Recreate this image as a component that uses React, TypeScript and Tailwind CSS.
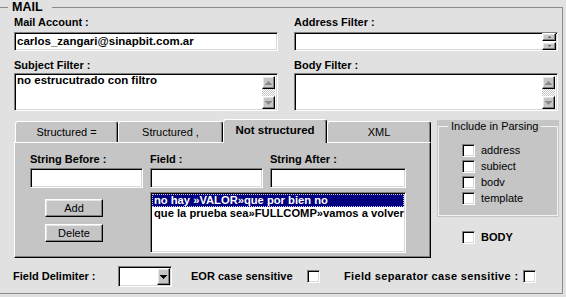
import React from "react";

const SUNKEN =
  "border border-t-[#808080] border-l-[#808080] border-b-white border-r-white shadow-[inset_1px_1px_0_#000000,inset_-1px_-1px_0_#d8d8d8]";
const RAISED =
  "border border-t-white border-l-white border-b-black border-r-black shadow-[inset_-1px_-1px_0_#808080,inset_1px_1px_0_#e6e6e6]";

function Tri({ dir, color, w, h }: { dir: "up" | "down"; color: string; w: number; h: number }) {
  const pts = dir === "up" ? `${w / 2},0 ${w},${h} 0,${h}` : `0,0 ${w},0 ${w / 2},${h}`;
  return (
    <svg width={w} height={h} viewBox={`0 0 ${w} ${h}`} shapeRendering="crispEdges" className="block">
      <polygon points={pts} fill={color} />
    </svg>
  );
}

function Label({ children, className = "" }: { children: React.ReactNode; className?: string }) {
  return <div className={`text-[11px] leading-[13px] font-bold whitespace-nowrap ${className}`}>{children}</div>;
}

function ScrollBtn({ dir }: { dir: "up" | "down" }) {
  return (
    <div className={`w-[13px] h-[13px] bg-[#c5c5c5] flex items-center justify-center ${RAISED}`}>
      <Tri dir={dir} color="#8a8a8a" w={7} h={4} />
    </div>
  );
}

function TextArea({ text }: { text?: string }) {
  return (
    <div className={`h-[38px] bg-white flex pr-[2px] ${SUNKEN}`}>
      <div className="flex-1 pl-[2px] text-[11.5px] leading-[13px] font-bold whitespace-nowrap">{text}</div>
      <div className="flex flex-col pt-[2px]">
        <ScrollBtn dir="up" />
        <div className="h-[7px] w-[13px] bg-[repeating-conic-gradient(#ffffff_0_25%,#c5c5c5_0_50%)] bg-[length:2px_2px]" />
        <ScrollBtn dir="down" />
      </div>
    </div>
  );
}

function Checkbox() {
  return <div className={`w-[13px] h-[13px] bg-white shrink-0 ${SUNKEN}`} />;
}

function Tab({ label, w, active }: { label: string; w: string; active?: boolean }) {
  if (active) {
    return (
      <div
        className={`${w} h-[24px] -mb-[1px] relative z-10 bg-[#c5c5c5] border-t border-l border-white border-r border-r-black rounded-t-[3px] shadow-[inset_-1px_0_0_#808080] flex items-center justify-center text-[11.5px] font-bold pb-[1px]`}
      >
        {label}
      </div>
    );
  }
  return (
    <div
      className={`${w} h-[21px] bg-[#c5c5c5] border-t border-l border-white border-r border-r-black rounded-t-[3px] shadow-[inset_-1px_0_0_#808080] flex items-center justify-center text-[11px]`}
    >
      {label}
    </div>
  );
}

function Button({ label }: { label: string }) {
  return (
    <div className={`w-[58px] h-[18px] bg-[#c5c5c5] flex items-center justify-center text-[11px] leading-[13px] ${RAISED}`}>
      {label}
    </div>
  );
}

export default function App() {
  return (
    <div className="w-[566px] h-[297px] overflow-hidden bg-[#e1e1e1] text-black font-['Liberation_Sans',Arial,sans-serif]">
      <fieldset className="w-[563px] h-[294px] m-0 p-0 min-w-0 border-t border-r border-b border-l-0 border-[#8a8a8a]">
        <legend className="ml-[8px] pl-[4px] pr-[9px] text-[12.5px] leading-[15px] font-bold">MAIL</legend>
        <div className="pl-[14px]">
          {/* Top fields */}
          <div className="grid grid-cols-[264px_264px] gap-x-[16px] pt-[1px]">
            <div className="flex flex-col">
              <Label>Mail Account :</Label>
              <div className={`mt-[3px] h-[19px] bg-white flex items-center pl-[2px] ${SUNKEN}`}>
                <span className="text-[11.5px] leading-[13px] font-bold whitespace-nowrap">carlos_zangari@sinapbit.com.ar</span>
              </div>
              <Label className="mt-[8px]">Subject Filter :</Label>
              <div className="mt-[1px]">
                <TextArea text="no estrucutrado con filtro" />
              </div>
            </div>
            <div className="flex flex-col">
              <Label>Address Filter :</Label>
              <div className={`mt-[3px] h-[19px] bg-white flex justify-end pr-[1px] ${SUNKEN}`}>
                <div className="flex flex-col gap-[1px]">
                  <div className={`w-[14px] h-[8px] bg-[#c5c5c5] flex items-center justify-center ${RAISED}`}>
                    <Tri dir="up" color="#6a6a6a" w={5} h={2} />
                  </div>
                  <div className={`w-[14px] h-[8px] bg-[#c5c5c5] flex items-center justify-center ${RAISED}`}>
                    <Tri dir="down" color="#6a6a6a" w={5} h={2} />
                  </div>
                </div>
              </div>
              <Label className="mt-[8px]">Body Filter :</Label>
              <div className="mt-[1px]">
                <TextArea />
              </div>
            </div>
          </div>

          {/* Middle: tabs + include in parsing */}
          <div className="flex mt-[8px]">
            <div className="w-[417px]">
              <div className="h-[23px] flex items-end pl-[1px]">
                <Tab label="Structured =" w="w-[103px]" />
                <Tab label="Structured ," w="w-[105px]" />
                <Tab label="Not structured" w="w-[104px]" active />
                <Tab label="XML" w="w-[104px]" />
              </div>
              <div className="h-[116px] bg-[#c5c5c5] border border-t-white border-l-white border-r-black border-b-black shadow-[inset_-1px_-1px_0_#808080] pt-[10px] pl-[15px]">
                <div className="grid grid-cols-[113px_113px_136px] gap-x-[7px]">
                  <Label>String Before :</Label>
                  <Label>Field :</Label>
                  <Label>String After :</Label>
                  <div className={`mt-[2px] h-[20px] bg-white ${SUNKEN}`} />
                  <div className={`mt-[2px] h-[20px] bg-white ${SUNKEN}`} />
                  <div className={`mt-[2px] h-[20px] bg-white ${SUNKEN}`} />
                  <div className="mt-[4px] pl-[15px] pt-[7px] flex flex-col gap-[7px]">
                    <Button label="Add" />
                    <Button label="Delete" />
                  </div>
                  <div className={`col-span-2 mt-[4px] h-[61px] bg-white px-[1px] pt-[1px] ${SUNKEN}`}>
                    <div className="h-[13px] bg-[#000080] text-white border border-dotted border-[#c8c8ff] flex items-center pl-[1px] text-[11.2px] leading-[13px] font-bold whitespace-nowrap">
                      no hay »VALOR»que por bien no
                    </div>
                    <div className="h-[13px] flex items-center pl-[2px] text-[11.2px] leading-[13px] font-bold whitespace-nowrap">
                      que la prueba sea»FULLCOMP»vamos a volver
                    </div>
                  </div>
                </div>
              </div>
            </div>

            <div className="ml-[6px] w-[122px]">
              <div className="mt-[1px] h-[97px] bg-[#c5c5c5] px-[1px]">
                <fieldset className="h-[96px] m-0 p-0 min-w-0 border border-[#f4f4f4]">
                  <legend className="ml-[9px] px-[3px] text-[11px] leading-[13px]">Include in Parsing</legend>
                  <div className="pl-[23px] pt-[9px] flex flex-col">
                    {["address", "subiect", "bodv", "template"].map((t) => (
                      <div key={t} className="h-[16px] flex items-center">
                        <Checkbox />
                        <span className="ml-[6px] text-[11px] leading-[13px]">{t}</span>
                      </div>
                    ))}
                  </div>
                </fieldset>
              </div>
              <div className="mt-[12px] h-[16px] pl-[25px] flex items-center">
                <Checkbox />
                <span className="ml-[6px] text-[11px] leading-[13px] font-bold">BODY</span>
              </div>
            </div>
          </div>

          {/* Bottom row */}
          <div className="flex items-center h-[21px] mt-[8px] -ml-[1px]">
            <div className="w-[105px] text-[11px] font-bold whitespace-nowrap">Field Delimiter :</div>
            <div className={`w-[54px] h-[21px] bg-white flex justify-end py-[1px] pr-[1px] ${SUNKEN}`}>
              <div className={`w-[13px] bg-[#c5c5c5] flex items-center justify-center ${RAISED}`}>
                <Tri dir="down" color="#000000" w={7} h={4} />
              </div>
            </div>
            <div className="ml-[19px] w-[116px] text-[11px] font-bold whitespace-nowrap">EOR case sensitive</div>
            <Checkbox />
            <div className="ml-[24px] w-[179px] text-[11px] font-bold tracking-[0.35px] whitespace-nowrap">Field separator case sensitive :</div>
            <Checkbox />
          </div>
        </div>
      </fieldset>
    </div>
  );
}
